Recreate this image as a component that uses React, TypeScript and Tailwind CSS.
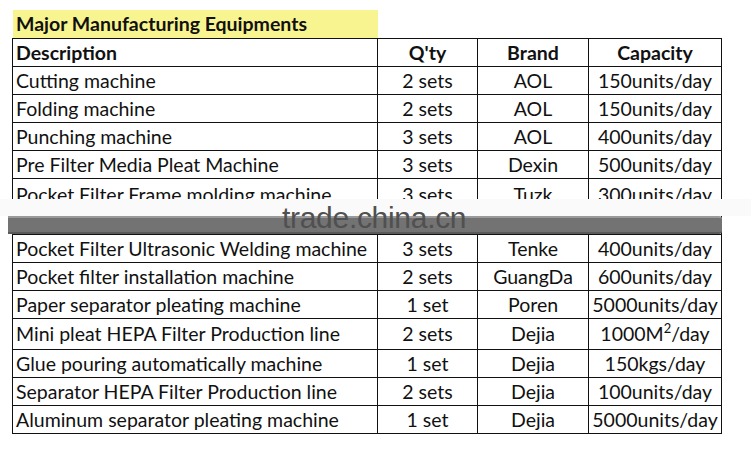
import React from "react";

type Row = { d: string; q: string; b: string; c: React.ReactNode; h: number };

const rowsTop: Row[] = [
  { d: "Cutting machine", q: "2 sets", b: "AOL", c: "150units/day", h: 28 },
  { d: "Folding machine", q: "2 sets", b: "AOL", c: "150units/day", h: 28 },
  { d: "Punching machine", q: "3 sets", b: "AOL", c: "400units/day", h: 28 },
  { d: "Pre Filter Media Pleat Machine", q: "3 sets", b: "Dexin", c: "500units/day", h: 28 },
];

const rowsBottom: Row[] = [
  { d: "Pocket Filter Ultrasonic Welding machine", q: "3 sets", b: "Tenke", c: "400units/day", h: 28 },
  { d: "Pocket filter installation machine", q: "2 sets", b: "GuangDa", c: "600units/day", h: 28 },
  { d: "Paper separator pleating machine", q: "1 set", b: "Poren", c: "5000units/day", h: 28 },
  {
    d: "Mini pleat HEPA Filter Production line",
    q: "2 sets",
    b: "Dejia",
    c: (
      <>
        1000M<sup className="text-[13px] relative -top-[8px]">2</sup>/day
      </>
    ),
    h: 31,
  },
  { d: "Glue pouring automatically machine", q: "1 set", b: "Dejia", c: "150kgs/day", h: 28 },
  { d: "Separator HEPA Filter Production line", q: "2 sets", b: "Dejia", c: "100units/day", h: 28 },
  { d: "Aluminum separator pleating machine", q: "1 set", b: "Dejia", c: "5000units/day", h: 28 },
];

function TRow({ r }: { r: Row }) {
  return (
    <tr style={{ height: r.h }}>
      <td className="border border-[#111] pl-[3px] text-left leading-none whitespace-nowrap">{r.d}</td>
      <td className="border border-[#111] text-center leading-none">{r.q}</td>
      <td className="border border-[#111] text-center leading-none">{r.b}</td>
      <td className="border border-[#111] text-center leading-none whitespace-nowrap">{r.c}</td>
    </tr>
  );
}

export default function App() {
  return (
    <div
      className="relative w-[751px] h-[454px] bg-white text-[#111] overflow-hidden"
      style={{ fontFamily: "Lato, 'Open Sans', sans-serif" }}
    >
      <div className="pt-[10px] pl-[13px]">
        <div className="w-[365px] h-[28px] bg-[#f8f590] flex items-center pl-[3px] font-bold text-[19.5px]">
          Major Manufacturing Equipments
        </div>
        <table className="-ml-[1px] border-collapse text-[19.5px] table-fixed w-[709px]">
          <colgroup>
            <col className="w-[365px]" />
            <col className="w-[100px]" />
            <col className="w-[111px]" />
            <col className="w-[133px]" />
          </colgroup>
          <tbody>
            <tr className="h-[28px] font-bold">
              <td className="border border-[#111] pl-[3px] text-left leading-none">Description</td>
              <td className="border border-[#111] text-center leading-none">Q'ty</td>
              <td className="border border-[#111] text-center leading-none">Brand</td>
              <td className="border border-[#111] text-center leading-none">Capacity</td>
            </tr>
            {rowsTop.map((r) => (
              <TRow key={r.d} r={r} />
            ))}
            <tr className="h-[56px]">
              <td className="border border-[#111] pl-[3px] text-left align-top leading-none pt-[6px] whitespace-nowrap">
                Pocket Filter Frame molding machine
              </td>
              <td className="border border-[#111] text-center align-top leading-none pt-[6px]">3 sets</td>
              <td className="border border-[#111] text-center align-top leading-none pt-[6px]">Tuzk</td>
              <td className="border border-[#111] text-center align-top leading-none pt-[6px]">300units/day</td>
            </tr>
            {rowsBottom.map((r) => (
              <TRow key={r.d} r={r} />
            ))}
          </tbody>
        </table>
      </div>

      {/* watermark band overlay */}
      <div className="absolute left-0 top-[199px] w-[751px] h-[17px] bg-[#fafafa]" />
      <div className="absolute left-[8px] top-[216px] w-[714px] h-[18px] bg-[#737373] border-t-2 border-t-[#9a9a9a] border-b-2 border-b-[#5a5a5a] rounded-r-[3px]" />
      <div
        className="absolute left-[282px] top-[203px] text-[30px] leading-none text-[#505050] tracking-[-0.3px]"
        style={{ fontFamily: "'Liberation Sans', Arial, sans-serif" }}
      >
        trade.china.cn
      </div>
    </div>
  );
}
